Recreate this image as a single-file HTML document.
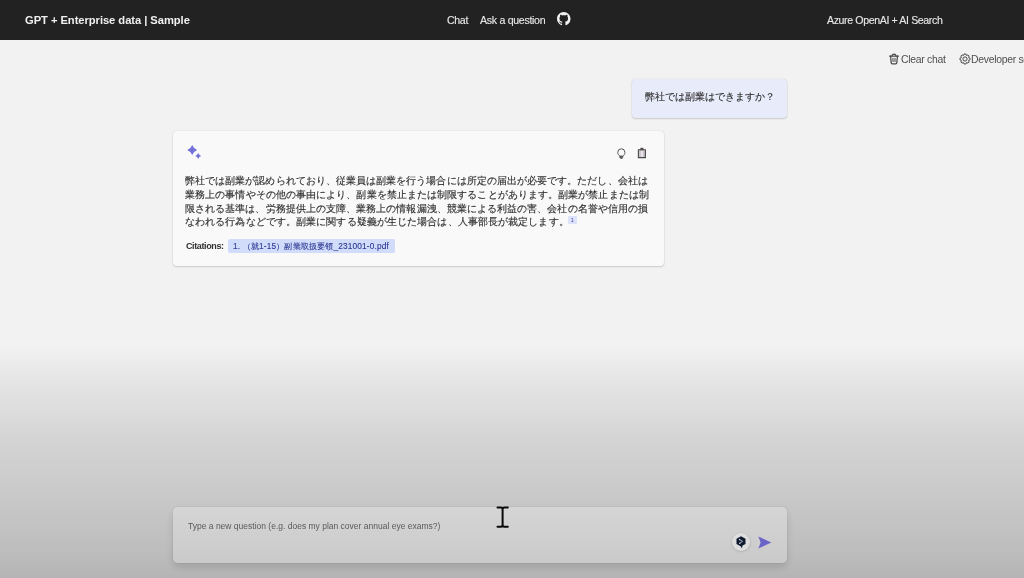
<!DOCTYPE html>
<html><head><meta charset="utf-8">
<style>
*{box-sizing:border-box;margin:0;padding:0}
html,body{width:1024px;height:578px;overflow:hidden}
body{font-family:"Liberation Sans",sans-serif;background:#f2f2f2;position:relative}
.hdr{position:absolute;left:0;top:0;width:1024px;height:40px;background:#222222;color:#f0f0f0}
.abs{position:absolute;white-space:nowrap}
.hdr .abs,.tool,.ans,.card .abs,.input .abs{will-change:transform}
.title{left:25px;top:13px;font-size:11.2px;font-weight:bold;line-height:14px;letter-spacing:-0.05px}
.nav{top:14.2px;font-size:10.6px;line-height:12px;color:#e8e8e8;-webkit-text-stroke:0.12px #e8e8e8}
.bubble{left:632px;top:79px;width:155px;height:39px;background:#e8ebfa;border-radius:4px;box-shadow:0 0 1.5px rgba(0,0,0,.13),0 1px 2px rgba(0,0,0,.14)}
.card{left:173px;top:131px;width:491px;height:135px;background:#f9f9f9;border-radius:4px;box-shadow:0 0 1.5px rgba(0,0,0,.13),0 1px 2px rgba(0,0,0,.14)}
.ans{font-size:9.95px;line-height:13.8px;color:#303030;white-space:normal;-webkit-text-stroke:0.15px #303030}
.input{z-index:6;left:173px;top:507px;width:614px;height:56px;background:linear-gradient(#d5d5d5,#cacaca);border-radius:5px;box-shadow:0 4px 8px rgba(0,0,0,.14),0 0 1.5px rgba(0,0,0,.12)}
.tool{top:54.4px;font-size:10.4px;line-height:12px;color:#4f4f4f;letter-spacing:-0.28px}
</style></head><body>
<div class="hdr">
  <div class="abs title">GPT + Enterprise data | Sample</div>
  <div class="abs nav" style="left:446.5px;letter-spacing:-0.35px">Chat</div>
  <div class="abs nav" style="left:479.5px;letter-spacing:-0.3px">Ask a question</div>
  <svg class="abs" style="left:557.3px;top:11.8px" width="13.5" height="13.5" viewBox="0 0 16 16"><path fill="#f2f2f2" d="M8 0C3.58 0 0 3.58 0 8c0 3.54 2.29 6.53 5.47 7.59.4.07.55-.17.55-.38 0-.19-.01-.82-.01-1.49-2.01.37-2.53-.49-2.690-.94-.09-.23-.48-.94-.82-1.13-.28-.15-.68-.52-.01-.53.63-.01 1.08.58 1.23.82.72 1.21 1.87.87 2.33.66.07-.52.28-.87.51-1.07-1.78-.2-3.64-.89-3.64-3.95 0-.87.31-1.59.82-2.15-.08-.2-.36-1.02.08-2.12 0 0 .67-.21 2.2.82.64-.18 1.32-.27 2-.27.68 0 1.36.09 2 .27 1.53-1.04 2.2-.82 2.2-.82.44 1.1.16 1.92.08 2.12.51.56.82 1.27.82 2.15 0 3.07-1.87 3.75-3.65 3.95.29.25.54.73.54 1.48 0 1.07-.01 1.93-.01 2.2 0 .21.15.46.55.38A8.013 8.013 0 0016 8c0-4.42-3.58-8-8-8z"/></svg>
  <div class="abs nav" style="left:827px;letter-spacing:-0.38px">Azure OpenAI + AI Search</div>
</div>
<!-- toolbar -->
<svg class="abs" style="left:888px;top:53px" width="12" height="12" viewBox="0 0 12 12"><g fill="none" stroke="#4a4a4a" stroke-width="1.25" stroke-linecap="round" stroke-linejoin="round"><path d="M1.5 3H10.5"/><path d="M4 2.8Q4.2 1.1 6 1.1Q7.8 1.1 8 2.8"/><path d="M2.6 3.2L3.2 9.9Q3.3 10.8 4.2 10.8H7.8Q8.7 10.8 8.8 9.9L9.4 3.2"/><path d="M5 5.3V8.6M7 5.3V8.6" stroke-width="1"/></g></svg>
<div class="abs tool" style="left:900.5px">Clear chat</div>
<svg class="abs" style="left:959px;top:53px" width="12" height="12" viewBox="0 0 12 12"><g fill="none" stroke="#4a4a4a" stroke-width="1" stroke-linejoin="round"><path d="M9.82 4.82 L11.03 5.14 L11.03 6.86 L9.82 7.18 L9.54 7.87 L10.16 8.94 L8.94 10.16 L7.87 9.54 L7.18 9.82 L6.86 11.03 L5.14 11.03 L4.82 9.82 L4.13 9.54 L3.06 10.16 L1.84 8.94 L2.46 7.87 L2.18 7.18 L0.97 6.86 L0.97 5.14 L2.18 4.82 L2.46 4.13 L1.84 3.06 L3.06 1.84 L4.13 2.46 L4.82 2.18 L5.14 0.97 L6.86 0.97 L7.18 2.18 L7.87 2.46 L8.94 1.84 L10.16 3.06 L9.54 4.13Z"/><circle cx="6" cy="6" r="2.1"/></g></svg>
<div class="abs tool" style="left:971px">Developer settings</div>

<div class="abs bubble"><div class="abs ans" style="left:12.5px;top:11px;font-size:10.1px;color:#333">弊社では副業はできますか？</div></div>

<div class="abs card">
  <svg class="abs" style="left:13px;top:13px" width="18" height="18" viewBox="0 0 18 18"><path fill="#7272da" d="M6.2 1.0Q7.5 4.7 11.2 6.0Q7.5 7.3 6.2 11.0Q4.9 7.3 1.2000000000000002 6.0Q4.9 4.7 6.2 1.0Z"/><path fill="#7272da" d="M12.2 9.1Q13.0 11.2 15.1 12.0Q13.0 12.8 12.2 14.9Q11.399999999999999 12.8 9.299999999999999 12.0Q11.399999999999999 11.2 12.2 9.1Z"/></svg>
  <svg class="abs" style="left:442px;top:15.6px" width="13" height="14" viewBox="0 0 13 14"><g stroke="#505050" stroke-width="0.95"><path fill="none" d="M4.9 9.1C3.6 8.3 2.75 7 2.75 5.37A3.57 3.57 0 0 1 9.9 5.37C9.9 7 9.05 8.3 7.75 9.1"/><path fill="#6a6a6a" d="M4.9 9.1H7.75V10.2Q7.75 11.4 6.33 11.4Q4.9 11.4 4.9 10.2Z"/></g></svg>
  <svg class="abs" style="left:464px;top:16px" width="10" height="12" viewBox="0 0 10 12"><path fill="#cdc4cd" stroke="#4a4a4a" stroke-width="1.1" d="M1.4 2.7h7v7.9h-7z"/><path fill="#f2eef2" d="M4.1 3.9h1.6v5.9H4.1z"/><path fill="#4a4a4a" d="M3.4.8h3v2.3h-3z"/></svg>
  <div class="abs ans" style="left:12.3px;top:43px;letter-spacing:0.06px">弊社では副業が認められており、従業員は副業を行う場合には所定の届出が必要です。ただし、会社は</div>
  <div class="abs ans" style="left:12.3px;top:56.8px;letter-spacing:0.085px">業務上の事情やその他の事由により、副業を禁止または制限することがあります。副業が禁止または制</div>
  <div class="abs ans" style="left:12.3px;top:70.6px;letter-spacing:0.067px">限される基準は、労務提供上の支障、業務上の情報漏洩、競業による利益の害、会社の名誉や信用の損</div>
  <div class="abs ans" style="left:12.3px;top:84.4px;letter-spacing:0.1px">なわれる行為などです。副業に関する疑義が生じた場合は、人事部長が裁定します。</div>
  <div class="abs" style="left:395px;top:84.5px;width:8.5px;height:8px;background:#dde3fa;border-radius:1px;font-size:5.5px;line-height:8px;text-align:center;color:#3b4ba0">1</div>
  <div class="abs" style="left:12.7px;top:110px;font-size:9px;font-weight:bold;letter-spacing:-0.38px;color:#323130;line-height:11px">Citations:</div>
  <div class="abs" style="left:54.5px;top:108px;width:166.5px;height:14px;background:#d1dbfa;border-radius:2px"></div>
  <div class="abs" style="left:59.5px;top:109.5px;font-size:8.3px;letter-spacing:0.16px;line-height:11px;color:#2c3a92;-webkit-text-stroke:0.12px #2c3a92">1. （就1-15）副業取扱要領_231001-0.pdf</div>
</div>

<div class="abs input">
  <div class="abs" style="left:15px;top:13.5px;font-size:8.5px;line-height:11px;color:#5a5a5a">Type a new question (e.g. does my plan cover annual eye exams?)</div>
  <div class="abs" style="left:559px;top:26px;width:18px;height:18px;border-radius:50%;background:#dedede;box-shadow:0 0.5px 2.5px rgba(0,0,0,.2)"></div>
  <svg class="abs" style="left:562.5px;top:28.5px" width="11" height="13" viewBox="0 0 11 13"><path fill="#0f1930" d="M5 .2 9.5 2.7V7.9L6.6 9.6 5.9 12.3 4.6 10.2.5 7.9V2.7z"/><g fill="none" stroke="#c5cadc" stroke-width=".85" stroke-linecap="round"><path d="M3.6 3.6 6.6 5.3 3.8 7.2"/></g><circle cx="3.6" cy="3.6" r=".8" fill="#c5cadc"/><circle cx="3.8" cy="7.2" r=".8" fill="#c5cadc"/></svg>
  <svg class="abs" style="left:585px;top:28.5px" width="14" height="13" viewBox="0 0 14 13"><path fill="#6b64c8" d="M.4.4 13.3 6.5.4 12.6 2.6 6.5z"/></svg>
</div>

<!-- I-beam cursor -->
<svg class="abs" style="left:494px;top:503px;z-index:7" width="18" height="28" viewBox="0 0 18 28"><path d="M3.5 4.5H6.8Q8.6 4.5 8.6 6.3V22Q8.6 23.8 6.8 23.8H3.5M13.8 4.5H10.4Q8.6 4.5 8.6 6.3M8.6 22Q8.6 23.8 10.4 23.8H13.8" fill="none" stroke="#0a0a0a" stroke-width="2" stroke-linecap="round"/></svg>
<div style="position:absolute;left:0;top:0;width:1024px;height:578px;pointer-events:none;z-index:5;background:linear-gradient(to bottom,rgba(0,0,0,0) 0px,rgba(0,0,0,0) 345px,rgba(0,0,0,.035) 370px,rgba(0,0,0,.075) 400px,rgba(0,0,0,.12) 440px,rgba(0,0,0,.155) 480px,rgba(0,0,0,.19) 520px,rgba(0,0,0,.215) 550px,rgba(0,0,0,.255) 578px)"></div>
</body></html>
